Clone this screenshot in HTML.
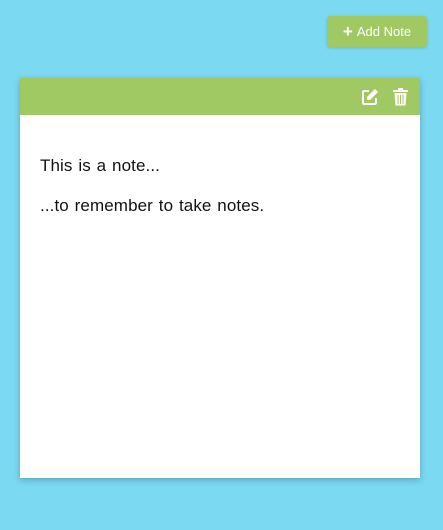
<!DOCTYPE html>
<html><head><style>
body{margin:0;width:443px;height:530px;background:#7bd9f2;font-family:"Liberation Sans",sans-serif;position:relative;overflow:hidden}
.btn{position:absolute;left:327px;top:16px;width:100px;height:31px;background:#a0c964;border-radius:3px;color:#fff;font-size:13px;display:flex;align-items:center;justify-content:center;box-shadow:0 1px 3px rgba(0,0,0,.15)}
.btn b{font-size:17px;margin-right:4px;font-weight:bold}
.card{position:absolute;left:20px;top:78px;width:400px;height:400px;background:#fff;box-shadow:0 2px 6px rgba(0,0,0,.25)}
.hd{height:37px;background:#a0c964;position:relative}
.txt{position:absolute;left:20px;top:78px;font-size:17px;letter-spacing:0.1px;word-spacing:1px;color:#111;line-height:20px}
.txt p{margin:0 0 20px}
</style></head><body>
<div class="btn"><b>+</b>Add Note</div>
<div class="card">
<div class="hd">
<svg style="position:absolute;left:341px;top:10px" width="18" height="18" viewBox="0 0 18 18"><path d="M8 3H3.5Q2 3 2 4.5v10Q2 16 3.5 16h10q1.5 0 1.5-1.5V10" fill="none" stroke="#fff" stroke-width="2"/><path d="M14 1l3 3-8 8H6V9z" fill="#fff"/></svg>
<svg style="position:absolute;left:373px;top:10px" width="15" height="18" viewBox="0 0 15 18"><rect x="0" y="2" width="15" height="2" rx="0.5" fill="#fff"/><rect x="5" y="0" width="5" height="2" fill="#fff"/><path d="M1.5 5h12l-1 12.5h-10z" fill="#fff"/><path d="M5 7v9M7.5 7v9M10 7v9" stroke="#a0c964" stroke-width="1"/></svg>
</div>
<div class="txt"><p>This is a note...</p><p>...to remember to take notes.</p></div>
</div>
</body></html>
